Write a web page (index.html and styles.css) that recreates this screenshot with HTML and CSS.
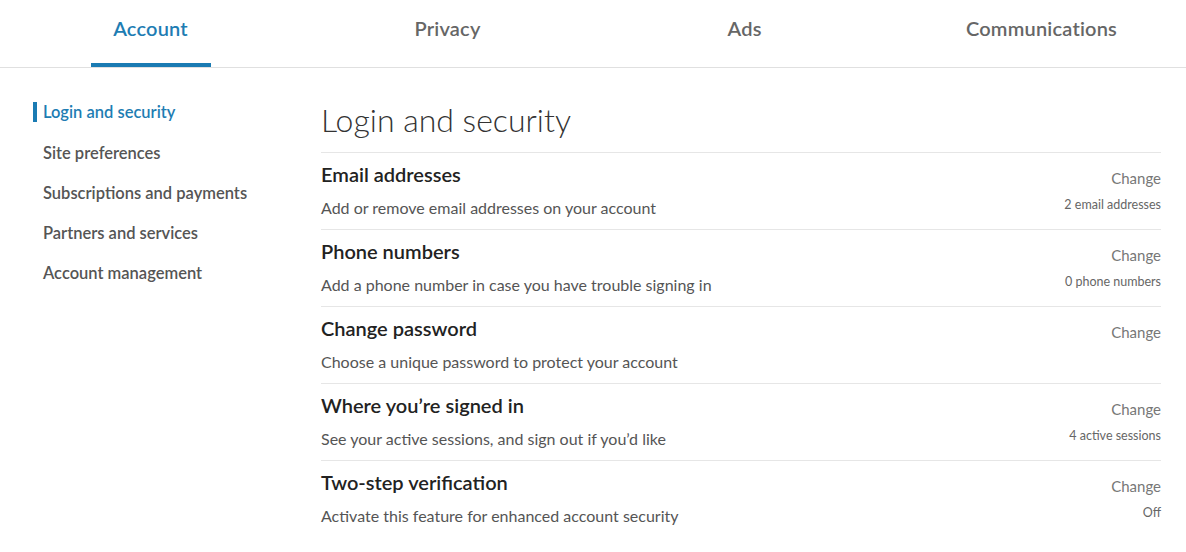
FILE: index.html
```html
<!DOCTYPE html>
<html>
<head>
<meta charset="utf-8">
<link rel="stylesheet" href="styles.css">
</head>
<body>
<nav class="tabs">
  <div class="tab active"><span>Account</span></div>
  <div class="tab"><span>Privacy</span></div>
  <div class="tab"><span>Ads</span></div>
  <div class="tab"><span>Communications</span></div>
</nav>
<div class="page">
  <aside class="side">
    <a class="side-item active">Login and security</a>
    <a class="side-item">Site preferences</a>
    <a class="side-item">Subscriptions and payments</a>
    <a class="side-item">Partners and services</a>
    <a class="side-item">Account management</a>
  </aside>
  <main class="main">
    <h1 class="title">Login and security</h1>
    <div class="row">
      <div class="left">
        <div class="row-title">Email addresses</div>
        <div class="row-desc">Add or remove email addresses on your account</div>
      </div>
      <div class="right">
        <div class="change">Change</div>
        <div class="meta">2 email addresses</div>
      </div>
    </div>
    <div class="row">
      <div class="left">
        <div class="row-title">Phone numbers</div>
        <div class="row-desc">Add a phone number in case you have trouble signing in</div>
      </div>
      <div class="right">
        <div class="change">Change</div>
        <div class="meta">0 phone numbers</div>
      </div>
    </div>
    <div class="row">
      <div class="left">
        <div class="row-title">Change password</div>
        <div class="row-desc">Choose a unique password to protect your account</div>
      </div>
      <div class="right">
        <div class="change">Change</div>
        <div class="meta"></div>
      </div>
    </div>
    <div class="row">
      <div class="left">
        <div class="row-title">Where you’re signed in</div>
        <div class="row-desc">See your active sessions, and sign out if you’d like</div>
      </div>
      <div class="right">
        <div class="change">Change</div>
        <div class="meta">4 active sessions</div>
      </div>
    </div>
    <div class="row">
      <div class="left">
        <div class="row-title">Two-step verification</div>
        <div class="row-desc">Activate this feature for enhanced account security</div>
      </div>
      <div class="right">
        <div class="change">Change</div>
        <div class="meta">Off</div>
      </div>
    </div>
  </main>
</div>
</body>
</html>
```
FILE: styles.css
```css
* { box-sizing: border-box; }
html, body { margin: 0; padding: 0; background: #fff; }
body {
  font-family: Lato, "Open Sans", "Liberation Sans", sans-serif;
  color: #333;
  width: 1186px;
  height: 552px;
  overflow: hidden;
}
.tabs {
  display: grid;
  grid-template-columns: repeat(4, 297px);
  height: 68px;
  border-bottom: 1px solid #e0e0e0;
  padding-left: 2px;
}
.tab {
  display: flex;
  justify-content: center;
}
.tab span {
  display: block;
  font-size: 20px;
  font-weight: 600;
  color: #666;
  line-height: 24px;
  padding-top: 16px;
  height: 67px;
  letter-spacing: 0.2px;
}
.tab.active span {
  color: #1e7db3;
  border-bottom: 4px solid #1a7bb3;
  width: 120px;
  text-align: center;
}
.page {
  display: flex;
  padding-top: 34px;
}
.side {
  width: 321px;
  padding-left: 33px;
  display: flex;
  flex-direction: column;
}
.side-item {
  display: block;
  font-size: 16.5px;
  font-weight: 600;
  color: #555;
  line-height: 22px;
  height: 40px;
  padding-left: 10px;
}
.side-item.active {
  color: #1e7db3;
  border-left: 4px solid #1a7bb3;
  padding-left: 6px;
  height: 20px;
  line-height: 20px;
  margin-bottom: 20px;
}
.main {
  width: 840px;
  margin-top: -1px;
}
.title {
  margin: 0;
  font-size: 32px;
  font-weight: 300;
  color: #333;
  line-height: 38px;
  height: 52px;
  border-bottom: 1px solid #e6e6e6;
}
.row {
  display: flex;
  justify-content: space-between;
  height: 77px;
  border-bottom: 1px solid #e6e6e6;
}
.row:last-child { border-bottom: none; }
.row-title {
  font-size: 20px;
  font-weight: 600;
  color: #222;
  line-height: 24px;
  padding-top: 9px;
}
.row-desc {
  font-size: 16px;
  color: #555;
  line-height: 20px;
  padding-top: 12px;
}
.right {
  text-align: right;
}
.change {
  font-size: 15px;
  color: #777;
  line-height: 20px;
  padding-top: 15px;
}
.meta {
  font-size: 12.5px;
  color: #666;
  line-height: 16px;
  padding-top: 9px;
}
```
